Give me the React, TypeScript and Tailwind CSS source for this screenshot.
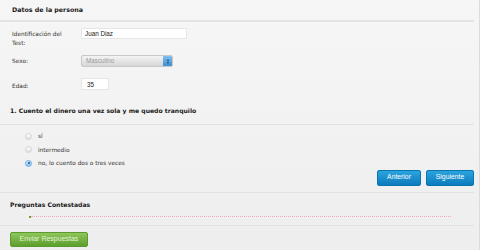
import { useState } from "react";

const opciones = ["sí", "intermedio", "no, lo cuento dos o tres veces"];

export default function App() {
  const [sel, setSel] = useState(2);

  return (
    <div className="flex h-[250px] w-[486px] bg-white font-['DejaVu_Sans',Verdana,sans-serif] text-[5.8px] text-[#333]">
      <div className="flex w-[480px] flex-col border-r border-[#dcdcdc] bg-gradient-to-b from-[#f6f6f6] to-[#eeeeee] pr-[5px]">
        {/* Cabecera */}
        <div className="flex h-[22px] shrink-0 items-center border-b-2 border-[#e3e3e3] px-[12px] text-[6.3px] font-bold leading-[8px] text-[#1a1a1a]">
          Datos de la persona
        </div>

        {/* Formulario */}
        <div className="flex flex-col px-[12px] pt-[6px]">
          <div className="flex h-[20px] items-start">
            <label className="w-[69px] pt-[2px] leading-[9px]">
              Identificación del
              <br />
              Test:
            </label>
            <input
              defaultValue="Juan Diaz"
              className="h-[11px] w-[106px] border border-[#e6e6e6] bg-white px-[3px] font-['Liberation_Sans',Arial,sans-serif] text-[6.3px] text-[#222] outline-none"
            />
          </div>
          <div className="mt-[7px] flex h-[12px] items-center">
            <label className="w-[69px] leading-[8px]">Sexo:</label>
            <div className="flex h-[12px] w-[92px] items-stretch overflow-hidden rounded-[2px] border border-[#c8c8c8] bg-gradient-to-b from-[#f4f4f4] to-[#d6d6d6]">
              <span className="flex flex-1 items-center px-[4px] font-['Liberation_Sans',Arial,sans-serif] text-[6.3px] text-[#9a9a9a]">
                Masculino
              </span>
              <span className="flex w-[9px] flex-col items-center justify-center gap-[1px] bg-gradient-to-b from-[#7fc0ee] to-[#3d8fd0]">
                <span className="block h-0 w-0 border-x-[1.5px] border-b-[2px] border-x-transparent border-b-[#1f3f66]" />
                <span className="block h-0 w-0 border-x-[1.5px] border-t-[2px] border-x-transparent border-t-[#1f3f66]" />
              </span>
            </div>
          </div>
          <div className="mt-[11px] flex h-[12px] items-center">
            <label className="w-[69px] pt-[4px] leading-[8px]">Edad:</label>
            <input
              defaultValue="35"
              className="h-[12px] w-[28px] border border-[#e6e6e6] bg-white px-[5px] font-['Liberation_Sans',Arial,sans-serif] text-[6.3px] text-[#222] outline-none"
            />
          </div>
        </div>

        {/* Pregunta */}
        <div className="mt-[17px] h-[18px] shrink-0 border-b border-[#e2e2e2] px-[10px] text-[6.1px] font-bold leading-[8px] text-[#1a1a1a]">
          1. Cuento el dinero una vez sola y me quedo tranquilo
        </div>

        <div className="flex flex-col gap-[5.5px] px-[25px] pt-[7px]">
          {opciones.map((o, i) => (
            <label key={o} className="flex h-[8px] items-center gap-[6px] leading-[8px]" onClick={() => setSel(i)}>
              <span
                className={
                  i === sel
                    ? "flex h-[7px] w-[7px] items-center justify-center rounded-full border border-[#6aaee6] bg-gradient-to-b from-[#cfe6fa] to-[#8fc4ef]"
                    : "h-[7px] w-[7px] rounded-full border border-[#d2d2d2] bg-gradient-to-b from-[#ffffff] to-[#e0e0e0]"
                }
              >
                {i === sel && <span className="block h-[2px] w-[2px] rounded-full bg-[#1d4f86]" />}
              </span>
              {o}
            </label>
          ))}
        </div>

        <div className="flex shrink-0 justify-end gap-[5px] border-b border-[#e2e2e2] pb-[6px] pt-[2.5px]">
          <button className="h-[16px] w-[44px] rounded-[2px] border border-[#0a76ad] bg-gradient-to-b from-[#2aa4de] to-[#0b7bbd] font-['Liberation_Sans',Arial,sans-serif] text-[6.8px] text-white">
            Anterior
          </button>
          <button className="h-[16px] w-[48px] rounded-[2px] border border-[#0a76ad] bg-gradient-to-b from-[#2aa4de] to-[#0b7bbd] font-['Liberation_Sans',Arial,sans-serif] text-[6.8px] text-white">
            Siguiente
          </button>
        </div>

        {/* Progreso */}
        <div className="flex shrink-0 flex-col border-b border-[#e2e2e2] px-[10px] pt-[8px]">
          <div className="text-[6.1px] font-bold leading-[8px] text-[#1a1a1a]">Preguntas Contestadas</div>
          <div className="mb-[7px] ml-[19px] mr-[13px] mt-[7px] flex h-[2px] items-center">
            <span className="block h-[2px] w-[2px] bg-[#67a62c]" />
            <span className="block h-0 flex-1 border-t border-dotted border-[#f0a8bb]" />
          </div>
        </div>

        <div className="px-[10px] pt-[6px]">
          <button className="h-[15px] w-[78px] rounded-[2px] border border-[#5b9a2c] bg-gradient-to-b from-[#8ec65a] to-[#5c9f2c] font-['Liberation_Sans',Arial,sans-serif] text-[7px] text-[#e4f2d8]">
            Enviar Respuestas
          </button>
        </div>
      </div>
    </div>
  );
}
